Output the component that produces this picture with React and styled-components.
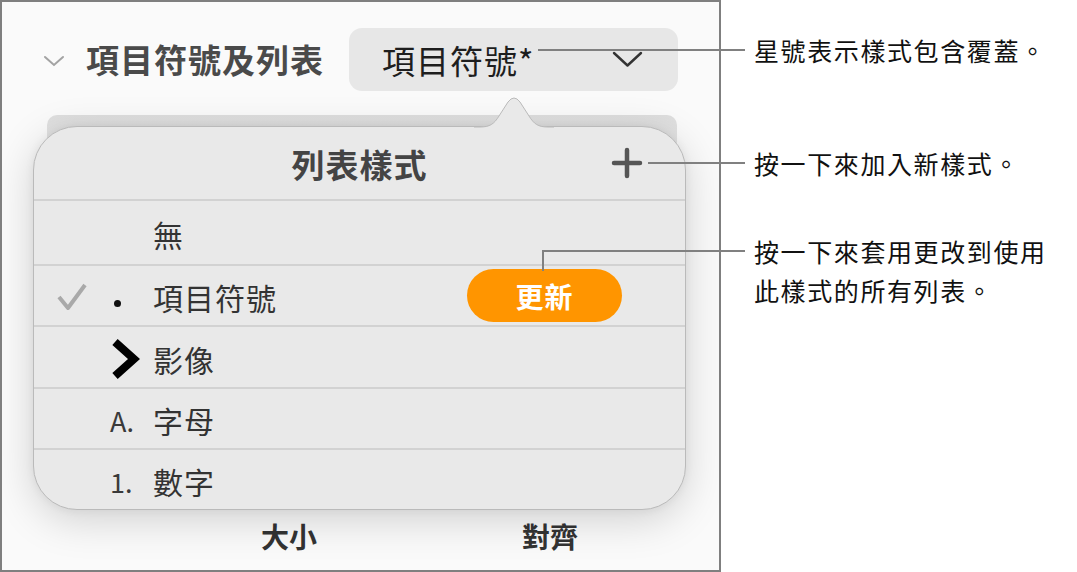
import styled, { createGlobalStyle } from "styled-components";

const GlobalStyle = createGlobalStyle`
  html, body {
    margin: 0;
    padding: 0;
    background: #ffffff;
  }
  body {
    font-family: "Noto Sans CJK TC", "Noto Sans", sans-serif;
  }
`;

const Page = styled.div`
  position: relative;
  width: 1077px;
  height: 572px;
  display: flex;
  background: #ffffff;
  overflow: hidden;
`;

const Frame = styled.div`
  box-sizing: border-box;
  width: 721px;
  height: 572px;
  border: 2px solid #7f7f7f;
  background: #fafafa;
  overflow: hidden;
  display: flex;
  flex-direction: column;
`;

const HeaderRow = styled.div`
  display: flex;
  align-items: center;
  height: 63px;
  margin-top: 26px;
  padding: 0 41px;
`;

const Disclosure = styled.svg`
  width: 22px;
  height: 14px;
  margin-right: 21px;
  margin-top: 2px;
`;

const SectionTitle = styled.div`
  flex: 1;
  font-size: 33px;
  font-weight: 700;
  letter-spacing: 1px;
  color: #4a4a4a;
  line-height: 1;
`;

const PopupButton = styled.div`
  box-sizing: border-box;
  width: 329px;
  height: 63px;
  border-radius: 13px;
  background: #e7e7e7;
  display: flex;
  align-items: center;
  justify-content: space-between;
  padding: 0 35px 0 33px;
  font-size: 33px;
  letter-spacing: 1px;
  color: #1e1e1e;
`;

const Stage = styled.div`
  display: grid;
  height: 419px;
`;

const Backdrop = styled.div`
  grid-area: 1 / 1;
  margin: 24px 0 0 45px;
  width: 630px;
  height: 380px;
  border-radius: 10px;
  background: linear-gradient(#dedede, #e4e4e4 30px);
`;

const Popover = styled.div`
  grid-area: 1 / 1;
  position: relative;
  box-sizing: border-box;
  margin: 35px 0 0 31px;
  width: 653px;
  height: 384px;
  border: 1px solid #bababa;
  border-radius: 44px;
  background: #e9e9e9;
  box-shadow: 0 10px 40px rgba(0, 0, 0, 0.17), 0 0 10px rgba(0, 0, 0, 0.06);
  display: flex;
  flex-direction: column;
`;

const Arrow = styled.svg`
  position: absolute;
  top: -30px;
  left: 446px;
  width: 68px;
  height: 32px;
  overflow: visible;
`;

const PopoverHeader = styled.div`
  display: grid;
  grid-template-columns: 1fr auto 1fr;
  align-items: center;
  height: 72px;
  border-bottom: 2px solid #d2d2d2;
`;

const PopoverTitle = styled.div`
  grid-column: 2;
  font-size: 33px;
  font-weight: 700;
  letter-spacing: 1px;
  color: #444;
  line-height: 1;
  margin-top: 2px;
`;

const AddIcon = styled.svg`
  justify-self: end;
  width: 32px;
  height: 32px;
  margin-right: 42px;
`;

const Row = styled.div`
  box-sizing: border-box;
  display: flex;
  align-items: center;
  height: ${(p) => p.$h}px;
  padding: 3px 63px 0 23px;
  border-bottom: ${(p) => (p.$last ? "none" : "2px solid #d2d2d2")};
  font-size: 30px;
  letter-spacing: 1px;
  color: #333;
`;

const CheckSlot = styled.div`
  width: 53px;
  display: flex;
  align-items: center;
`;

const MarkerSlot = styled.div`
  width: 43px;
  display: flex;
  align-items: center;
  font-size: 27px;
  letter-spacing: 0;
  color: #3a3a3a;
`;

const Dot = styled.span`
  width: 7px;
  height: 7px;
  border-radius: 50%;
  background: #111;
  margin: 12px 0 0 4px;
`;

const Label = styled.div`
  line-height: 1;
`;

const UpdateButton = styled.div`
  margin-left: auto;
  margin-top: -3px;
  width: 155px;
  height: 53px;
  border-radius: 27px;
  background: #ff9500;
  color: #ffffff;
  font-size: 28px;
  font-weight: 700;
  letter-spacing: 1px;
  display: flex;
  align-items: center;
  justify-content: center;
`;

const Footer = styled.div`
  display: flex;
  gap: 81px;
  padding: 6px 0 0 197px;
`;

const FooterLabel = styled.div`
  width: 180px;
  text-align: center;
  font-size: 28px;
  font-weight: 700;
  color: #333;
  line-height: 40px;
`;

const Notes = styled.div`
  flex: 1;
  padding-left: 33px;
  display: flex;
  flex-direction: column;
`;

const Note = styled.div`
  margin-top: ${(p) => p.$top}px;
  font-size: 25px;
  letter-spacing: 1.6px;
  line-height: 39px;
  color: #111;
`;

const Leader = styled.div`
  position: absolute;
  background: #808080;
  left: ${(p) => p.$x}px;
  top: ${(p) => p.$y}px;
  width: ${(p) => p.$w}px;
  height: ${(p) => p.$h}px;
`;

const Check = () => (
  <svg width="30" height="28" viewBox="0 0 30 28">
    <path d="M2 14 L11 25 L28 2" fill="none" stroke="#a9a9a9" strokeWidth="4" strokeLinejoin="round" />
  </svg>
);

const ImageBullet = () => (
  <svg width="30" height="42" viewBox="0 0 30 42">
    <path d="M5 4 L24 21 L5 38" fill="none" stroke="#000" strokeWidth="8" strokeLinejoin="miter" />
  </svg>
);

const styles = [
  { name: "無", h: 65 },
  { name: "項目符號", h: 61, marker: "dot", checked: true, update: true },
  { name: "影像", h: 62, marker: "image" },
  { name: "字母", h: 61, marker: "A." },
  { name: "數字", h: 59, marker: "1." },
];

const renderMarker = (marker) => {
  if (marker === "dot") return <Dot />;
  if (marker === "image") return <ImageBullet />;
  return marker || null;
};

export default function App() {
  return (
    <>
      <GlobalStyle />
      <Page>
        <Frame>
          <HeaderRow>
            <Disclosure viewBox="0 0 22 14">
              <path d="M2 3 L11 11 L20 3" fill="none" stroke="#a3a3a3" strokeWidth="2" strokeLinecap="round" />
            </Disclosure>
            <SectionTitle>項目符號及列表</SectionTitle>
            <PopupButton>
              <span>項目符號*</span>
              <svg width="31" height="17" viewBox="0 0 31 17">
                <path d="M2 2 L15.5 14.5 L29 2" fill="none" stroke="#333" strokeWidth="2.4" strokeLinecap="round" strokeLinejoin="round" />
              </svg>
            </PopupButton>
          </HeaderRow>

          <Stage>
            <Backdrop />
            <Popover>
              <Arrow viewBox="0 0 68 32">
                <path
                  d="M0 30 C10 30 14 27 19 19 L28 5 Q34 -3 40 5 L49 19 C54 27 58 30 68 30 L68 33 L0 33 Z"
                  fill="#e9e9e9"
                />
                <path
                  d="M-6 30 L0 30 C10 30 14 27 19 19 L28 5 Q34 -3 40 5 L49 19 C54 27 58 30 68 30 L74 30"
                  fill="none"
                  stroke="#bababa"
                  strokeWidth="1"
                />
              </Arrow>
              <PopoverHeader>
                <PopoverTitle>列表樣式</PopoverTitle>
                <AddIcon viewBox="0 0 32 32">
                  <path d="M16 3 V29 M3 16 H29" stroke="#555" strokeWidth="4.5" strokeLinecap="round" />
                </AddIcon>
              </PopoverHeader>
              {styles.map((s, i) => (
                <Row key={s.name} $h={s.h} $last={i === styles.length - 1}>
                  <CheckSlot>{s.checked && <Check />}</CheckSlot>
                  <MarkerSlot>{renderMarker(s.marker)}</MarkerSlot>
                  <Label>{s.name}</Label>
                  {s.update && <UpdateButton>更新</UpdateButton>}
                </Row>
              ))}
            </Popover>
          </Stage>

          <Footer>
            <FooterLabel>大小</FooterLabel>
            <FooterLabel>對齊</FooterLabel>
          </Footer>
        </Frame>

        <Notes>
          <Note $top={31}>星號表示樣式包含覆蓋。</Note>
          <Note $top={74}>按一下來加入新樣式。</Note>
          <Note $top={49}>
            按一下來套用更改到使用
            <br />
            此樣式的所有列表。
          </Note>
        </Notes>

        <Leader $x={538} $y={49} $w={207} $h={2} />
        <Leader $x={648} $y={162} $w={97} $h={2} />
        <Leader $x={542} $y={250} $w={203} $h={2} />
        <Leader $x={542} $y={250} $w={2} $h={21} />
      </Page>
    </>
  );
}
